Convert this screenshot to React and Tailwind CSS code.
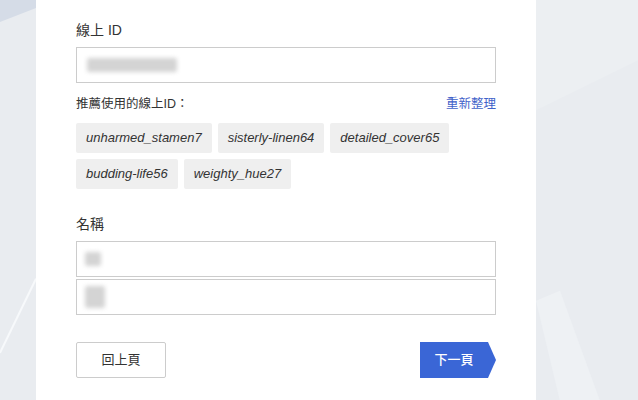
import React from "react";

const font = { fontFamily: '"Liberation Sans", "Noto Sans CJK TC", sans-serif' };

const suggestions = [
  ["unharmed_stamen7", "sisterly-linen64", "detailed_cover65"],
  ["budding-life56", "weighty_hue27"],
];

const Chip = ({ text }) => (
  <span className="flex h-[30px] items-center rounded-[2px] bg-[#efefef] px-[10px] text-[13px] italic text-[#333]">
    {text}
  </span>
);

const Blur = ({ className }) => (
  <div className={`rounded-[2px] bg-[#d4d4d4] blur-[2px] ${className}`} />
);

export default function App() {
  return (
    <div
      className="relative flex min-h-[400px] w-full overflow-hidden bg-[#e9ecf0]"
      style={font}
    >
      <svg className="absolute inset-0 h-full w-full" viewBox="0 0 638 400" preserveAspectRatio="none">
        <polygon points="0,0 36,0 36,8 0,22" fill="#d5dce7" />
        <line x1="36" y1="278" x2="0" y2="352" stroke="#f7f9fb" strokeWidth="2" />
        <polygon points="536,0 638,0 638,60 536,110" fill="#eceff2" />
        <polygon points="536,300 560,290 600,400 560,400" fill="#eef1f4" />
      </svg>
      <div className="relative ml-[36px] w-[500px] bg-white px-[40px] pt-[20px] pb-[23px]">
        <div className="text-[14px] leading-[20px] text-[#333]">線上 ID</div>
        <div className="mt-[7px] flex h-[36px] items-center border border-[#cccccc] px-[10px]">
          <Blur className="h-[14px] w-[90px]" />
        </div>

        <div className="mt-[12px] flex items-center justify-between text-[12.5px] leading-[18px]">
          <span className="text-[#333]">推薦使用的線上ID：</span>
          <span className="text-[#3f62c9]">重新整理</span>
        </div>

        <div className="mt-[10px] flex flex-col gap-[6px]">
          {suggestions.map((row, i) => (
            <div key={i} className="flex gap-[6px]">
              {row.map((s) => (
                <Chip key={s} text={s} />
              ))}
            </div>
          ))}
        </div>

        <div className="mt-[25px] text-[14px] leading-[20px] text-[#333]">名稱</div>
        <div className="mt-[7px] flex h-[36px] items-center border border-[#cccccc] px-[8px]">
          <Blur className="h-[14px] w-[16px]" />
        </div>
        <div className="mt-[2px] flex h-[36px] items-center border border-[#cccccc] px-[8px]">
          <Blur className="h-[22px] w-[20px]" />
        </div>

        <div className="mt-[27px] flex items-center justify-between">
          <button className="flex h-[36px] w-[90px] items-center justify-center rounded-[2px] border border-[#cccccc] bg-white text-[13px] text-[#333]">
            回上頁
          </button>
          <div className="flex h-[36px] items-stretch">
            <div className="flex w-[66px] items-center justify-center bg-[#3a66d6] pl-[2px] text-[13px] font-medium text-white">
              下一頁
            </div>
            <svg width="10" height="36" viewBox="0 0 10 36">
              <polygon points="0,0 2,0 10,18 2,36 0,36" fill="#3a66d6" />
            </svg>
          </div>
        </div>
      </div>
    </div>
  );
}
